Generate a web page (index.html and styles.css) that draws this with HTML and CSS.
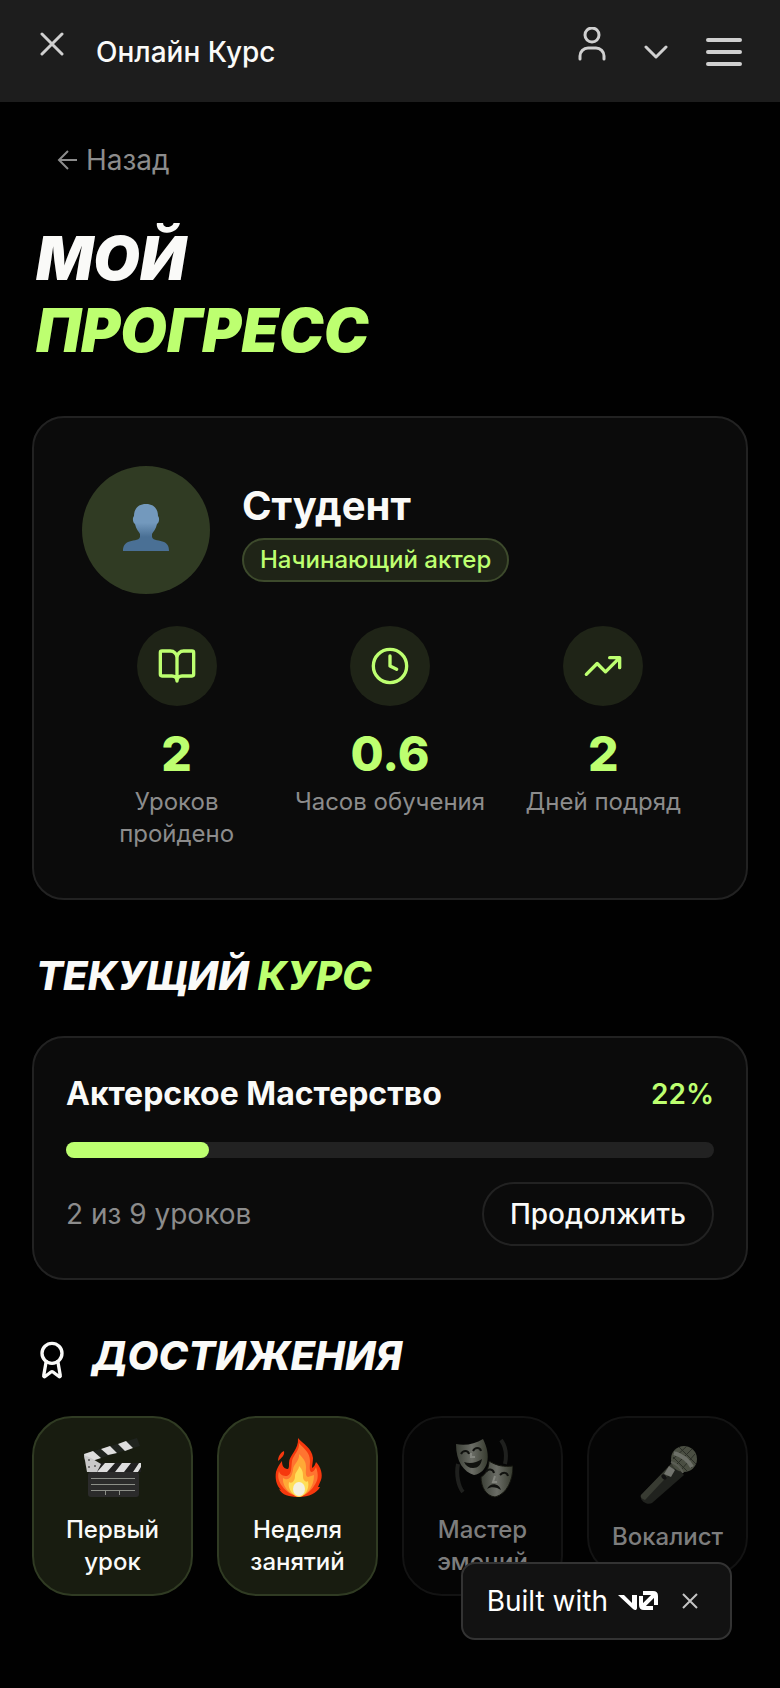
FILE: index.html
```html
<!DOCTYPE html>
<html lang="ru">

<head>
    <meta charset="UTF-8">
    <meta name="viewport" content="width=device-width, initial-scale=1.0">
    <title>Онлайн Курс</title>
    <link rel="stylesheet" href="styles.css">
</head>

<body>
    <!-- header -->
    <header class="topbar">
        <button class="icon-btn close" type="button" aria-label="Закрыть">
            <svg width="24" height="24" viewBox="0 0 24 24"><path d="M2 2l20 20M22 2L2 22" /></svg>
        </button>
        <span class="app-name">Онлайн Курс</span>
        <button class="icon-btn user" type="button" aria-label="Профиль">
            <svg width="28" height="34" viewBox="0 0 28 34"><circle cx="14" cy="8" r="7" /><path d="M2 32v-3a8 8 0 0 1 8-8h8a8 8 0 0 1 8 8v3" /></svg>
        </button>
        <button class="icon-btn" type="button" aria-label="Развернуть">
            <svg width="24" height="14" viewBox="0 0 24 14"><path d="M2 2l10 10L22 2" /></svg>
        </button>
        <button class="icon-btn menu" type="button" aria-label="Меню">
            <svg width="36" height="28" viewBox="0 0 36 28"><path d="M2 2h32M2 14h32M2 26h32" /></svg>
        </button>
    </header>

    <main class="page">
        <a class="back" href="#">
            <svg width="22" height="20" viewBox="0 0 22 20"><path d="M21 10H3M12 1l-9 9 9 9" /></svg>
            Назад
        </a>

        <h1 class="title">МОЙ<br><span class="accent">ПРОГРЕСС</span></h1>

        <!-- profile -->
        <section class="card profile">
            <div class="person">
                <div class="avatar">
                    <svg width="48" height="48" viewBox="0 0 48 48">
                        <defs>
                            <linearGradient id="bust" x1="0" y1="0" x2="0" y2="1">
                                <stop offset="0.4" stop-color="#7399bd" />
                                <stop offset="0.7" stop-color="#4a7095" />
                            </linearGradient>
                        </defs>
                        <path fill="url(#bust)" d="M24 0c8 0 12 5 12 12 2 2 1 7-1 8-1 5-4 8-5 10v3c1 4 8 3 12 5 4 2 5 5 5 9H1c0-4 1-7 5-9 4-2 11-1 12-5v-3c-1-2-4-5-5-10-2-1-3-6-1-8C12 5 16 0 24 0z" />
                    </svg>
                </div>
                <div>
                    <h2 class="name">Студент</h2>
                    <span class="badge">Начинающий актер</span>
                </div>
            </div>
            <div class="stats">
                <div class="stat">
                    <div class="stat-icon">
                        <svg width="40" height="40" viewBox="0 0 24 24"><path d="M12 7v14M3 18a1 1 0 0 1-1-1V4a1 1 0 0 1 1-1h5a4 4 0 0 1 4 4 4 4 0 0 1 4-4h5a1 1 0 0 1 1 1v13a1 1 0 0 1-1 1h-6a3 3 0 0 0-3 3 3 3 0 0 0-3-3z" /></svg>
                    </div>
                    <div class="stat-value">2</div>
                    <div class="stat-label">Уроков пройдено</div>
                </div>
                <div class="stat">
                    <div class="stat-icon">
                        <svg width="40" height="40" viewBox="0 0 24 24"><circle cx="12" cy="12" r="10" /><path d="M12 6v6l4 2" /></svg>
                    </div>
                    <div class="stat-value">0.6</div>
                    <div class="stat-label">Часов обучения</div>
                </div>
                <div class="stat">
                    <div class="stat-icon">
                        <svg width="40" height="40" viewBox="0 0 24 24"><path d="M22 7l-8.500 8.500-5-5L2 17M16 7h6v6" /></svg>
                    </div>
                    <div class="stat-value">2</div>
                    <div class="stat-label">Дней подряд</div>
                </div>
            </div>
        </section>

        <!-- current course -->
        <h2 class="section-title">ТЕКУЩИЙ <span class="accent">КУРС</span></h2>
        <section class="card course">
            <div class="row">
                <h3 class="course-name">Актерское Мастерство</h3>
                <span class="percent">22%</span>
            </div>
            <div class="bar"><div class="bar-fill" style="width: 22%"></div></div>
            <div class="row">
                <span class="lessons">2 из 9 уроков</span>
                <button class="continue" type="button">Продолжить</button>
            </div>
        </section>

        <!-- achievements -->
        <h2 class="section-title">
            <svg width="40" height="40" viewBox="0 0 24 24"><circle cx="12" cy="8" r="6" /><path d="M15.500 12.900l1.500 8.500a.5.5 0 0 1-.8.500l-3.600-2.700a1 1 0 0 0-1.200 0l-3.600 2.700a.5.5 0 0 1-.8-.500l1.500-8.500" /></svg>
            <span>ДОСТИЖЕНИЯ</span>
        </h2>
        <div class="tiles">
            <div class="tile">
                <svg width="60" height="60" viewBox="0 0 60 60">
                    <path fill="#20241f" d="M1 16L54 0l3 8L5 24z" />
                    <path fill="#dedede" d="M1 16l9-3 8 7-9 3-7-1zM18 11l9-3 7 7-9 2zM35 6l8-3 7 7-8 3z" />
                    <path fill="#202020" d="M4 25h54v9H4z" />
                    <path fill="#dedede" d="M14 34l8-9h10l-8 9zM32 34l7-9h9l-7 9zM50 34l6-9h2v4l-3 5z" />
                    <path fill="#c9c9c9" d="M1 17l7 3 10 6-4 8H4z" />
                    <circle cx="6" cy="22" r="1" fill="#555" /><circle cx="6" cy="29" r="1" fill="#555" /><circle cx="12" cy="28" r="1" fill="#555" />
                    <rect x="5" y="34" width="51" height="25" rx="3" fill="#2b2b2b" />
                    <path stroke="#8c8f88" stroke-width="1" d="M8 40.500h44M8 46.500h44M8 52.500h44M22.500 53v4M36.500 53v4" />
                </svg>
                <span>Первый урок</span>
            </div>
            <div class="tile">
                <svg width="60" height="60" viewBox="0 0 60 60">
                    <path fill="#f6380d" d="M30 0c5 6 14 10 15 20 0 4-1 7-1 10 2-1 3-3 4-6 5 5 7 13 5 18l-3 7h2c-3 6-11 10-21 10S14 57 11 51l2 1c-5-5-6-12-5-18 1-4 3-7 6-11 0 4 1 7 5 8 2 0 2-2 2-6 0-8 10-13 9-25zM16 13c1 5-3 7-6 10 0-4 2-8 6-10z" />
                    <path fill="#ff7430" d="M31 5c5 6 11 9 11 18 0 4-1 9 1 11 2 0 4-2 5-5 3 8 2 14-2 19-4 6-9 10-15 10s-13-4-17-10c-3-4-5-9-3-15 1 4 4 5 8 5 5-2 4-8 5-15 1-6 8-11 7-18z" />
                    <path fill="#ffa936" d="M31 16c5 5 7 8 7 13 0 5-1 9 2 10l6-2c0 13-8 21-15 21s-17-8-16-18c6 4 9-2 10-8 0-6 7-9 6-16z" />
                    <path fill="#ffdf58" d="M31 28c4 4 4 7 4 11 0 3 3 6 5 4 2 9-4 16-9 16s-12-8-10-15c3 2 6-1 6-6 0-4 4-6 4-10z" />
                    <ellipse cx="31" cy="51" rx="6" ry="7" fill="#f4f0df" />
                </svg>
                <span>Неделя занятий</span>
            </div>
            <div class="tile locked">
                <svg width="60" height="60" viewBox="0 0 60 60">
                    <defs>
                        <linearGradient id="mask" x1="0" y1="0" x2="1" y2="0">
                            <stop offset="0" stop-color="#3b3f36" />
                            <stop offset="0.5" stop-color="#6b6d66" />
                            <stop offset="1" stop-color="#363a2e" />
                        </linearGradient>
                    </defs>
                    <path fill="none" stroke="#1f201e" stroke-width="4" d="M5 26c-2 10 0 22 5 28M48 2c5 7 6 15 4 24" />
                    <path fill="url(#mask)" d="M3 6c9 2 19 0 27-5 4 8 6 16 4 24-2 6-6 11-13 12C11 34 3 24 3 6z" />
                    <path fill="none" stroke="#11120f" stroke-width="2" d="M8 16c2-4 7-4 8 0M20 13c2-4 7-4 8 0" />
                    <path fill="none" stroke="#84867f" stroke-width="2" d="M18 15v4h4" />
                    <path fill="#11120f" d="M11 24c6 2 12 1 18-3-1 6-4 9-9 9-4 0-7-2-9-6z" />
                    <path fill="url(#mask)" stroke="#15160f" d="M36 23c8 5 15 6 24 5 0 14-6 28-18 31-9-1-14-10-14-20 4-2 8-8 8-16z" />
                    <path fill="none" stroke="#11120f" stroke-width="2" d="M33 34c2-4 7-3 8 1M47 37c3-3 7-3 8 1" />
                    <path fill="none" stroke="#84867f" stroke-width="2" d="M42 38l-2 6h4" />
                    <path fill="#11120f" d="M34 51c3-7 12-6 14 1-4-3-10-4-14-1z" />
                </svg>
                <span>Мастер эмоций</span>
            </div>
            <div class="tile locked">
                <svg width="60" height="60" viewBox="0 0 60 60">
                    <path fill="#20221e" d="M34 18l12 12-32 28c-5 3-13-3-11-8z" />
                    <path fill="#383b32" d="M34 18l4 4L7 55c-3-1-5-3-4-5z" />
                    <path fill="#72746e" d="M31 21l6 4-4 7-7-3z" />
                    <ellipse cx="26" cy="32" rx="3" ry="2" fill="#111" transform="rotate(45 26 32)" />
                    <circle cx="46" cy="14" r="13" fill="#4a4e42" />
                    <path fill="none" stroke="#2b2e27" stroke-width="1" d="M37 6l17 17M41 2l17 17M35 12l14 14M57 9L43 25M54 4L38 20M49 1L35 14" />
                    <path fill="none" stroke="#6d7068" stroke-width="4" d="M36 8c7 2 14 7 18 14" />
                    <path fill="none" stroke="#5b5e55" stroke-width="2" d="M33 17c6 2 10 6 12 11" />
                </svg>
                <span>Вокалист</span>
            </div>
        </div>
    </main>

    <!-- floating widget -->
    <div class="built">
        <a class="built-link" href="#">Built with
            <svg width="40" height="20" viewBox="0 0 40 20" role="img" aria-label="v0">
                <path fill="#fff" d="M0 4h6l8 8V4h5v13c0 2-2 3-4 1z" />
                <path fill="none" stroke="#fff" stroke-width="4" d="M23 5v9c0 2 1 3 3 3h9M25 2h10c2 0 3 1 3 3v9M24 16L37 3" />
            </svg>
        </a>
        <button class="built-close" type="button" aria-label="Close">
            <svg width="16" height="16" viewBox="0 0 16 16"><path d="M1 1l14 14M15 1L1 15" /></svg>
        </button>
    </div>
</body>

</html>
```
FILE: styles.css
```css
* {
    box-sizing: border-box;
}

body {
    --lime: #bdff70;
    --text: #fafaf8;
    --muted: #8c8c8c;
    --line: #222;
    --card: #0b0b0b;
    margin: 0;
    background-color: #010101;
    color: var(--text);
    font-family: Inter, "Noto Sans", sans-serif;
    font-size: 28px;
    line-height: 40px;
}

h1, h2, h3 {
    margin: 0;
}

button {
    font: inherit;
    color: inherit;
    background: none;
    border: 0;
    padding: 0;
    cursor: pointer;
}

a {
    color: inherit;
    text-decoration: none;
}

svg {
    display: block;
    flex: none;
}

.accent {
    color: var(--lime);
}

/* header */
.topbar {
    display: flex;
    align-items: center;
    height: 102px;
    padding: 2px 38px 0 40px;
    background-color: #1d1d1d;
    font-weight: 500;
}

.icon-btn svg {
    fill: none;
    stroke: #d0d0d0;
    stroke-width: 3;
    stroke-linecap: round;
    stroke-linejoin: round;
}

.close,
.user {
    padding-bottom: 16px;
}

.app-name {
    flex: 1;
    margin-left: 32px;
}

.user {
    margin-right: 38px;
}

.menu {
    margin-left: 38px;
}

.icon-btn.menu svg {
    stroke-width: 4;
}

/* page */
.page {
    padding: 38px 32px 92px;
}

.back {
    display: inline-flex;
    align-items: center;
    gap: 8px;
    padding: 0 24px;
    color: var(--muted);
}

.back svg {
    fill: none;
    stroke: currentColor;
    stroke-width: 2;
}

.title {
    margin: 42px 0 50px;
    padding-left: 4px;
    font-size: 60px;
    line-height: 72px;
    font-weight: 900;
    font-style: italic;
}

.card {
    border: 2px solid var(--line);
    border-radius: 32px;
    background-color: var(--card);
}

.profile {
    padding: 48px;
}

.person {
    display: flex;
    align-items: center;
    gap: 32px;
    margin-bottom: 32px;
}

.avatar {
    display: flex;
    align-items: center;
    justify-content: center;
    width: 128px;
    height: 128px;
    padding-bottom: 4px;
    border-radius: 50%;
    background-color: #303b23;
}

.name {
    margin-bottom: 4px;
    font-size: 40px;
    line-height: 56px;
    font-weight: 700;
}

.badge {
    display: block;
    padding: 4px 16px;
    border: 2px solid #3d4a2c;
    border-radius: 22px;
    background-color: #1f2417;
    color: var(--lime);
    font-size: 24px;
    line-height: 32px;
    font-weight: 500;
}

.stats {
    display: grid;
    grid-template-columns: repeat(3, 1fr);
    gap: 24px;
}

.stat {
    text-align: center;
}

.stat-icon {
    display: flex;
    align-items: center;
    justify-content: center;
    width: 80px;
    height: 80px;
    margin: 0 auto 16px;
    border-radius: 50%;
    background-color: #1f2417;
}

.stat-icon svg,
.section-title svg {
    fill: none;
    stroke: var(--lime);
    stroke-width: 2;
    stroke-linecap: round;
    stroke-linejoin: round;
}

.stat-value {
    color: var(--lime);
    font-size: 48px;
    line-height: 64px;
    font-weight: 800;
}

.stat-label {
    margin: 0 -4px;
    color: var(--muted);
    font-size: 24px;
    line-height: 32px;
}

.section-title {
    margin: 48px 0 32px;
    padding-left: 4px;
    font-size: 40px;
    line-height: 56px;
    font-weight: 800;
    font-style: italic;
}

.section-title:has(svg) {
    display: flex;
    gap: 20px;
    padding-left: 0;
}

.section-title svg {
    margin-top: 12px;
    stroke: var(--text);
}

/* course */
.course {
    padding: 32px;
}

.row {
    display: flex;
    align-items: center;
    justify-content: space-between;
}

.course-name {
    font-size: 32px;
    line-height: 48px;
    font-weight: 700;
}

.percent {
    color: var(--lime);
    font-weight: 600;
}

.bar {
    height: 16px;
    margin: 24px 0;
    border-radius: 8px;
    background-color: var(--line);
}

.bar-fill {
    height: 100%;
    border-radius: 8px;
    background-color: var(--lime);
}

.lessons {
    color: var(--muted);
}

.continue {
    height: 64px;
    padding: 0 26px;
    border: 2px solid var(--line);
    border-radius: 32px;
    font-weight: 500;
}

/* achievements */
.tiles {
    display: grid;
    grid-template-columns: repeat(4, 1fr);
    align-items: start;
    gap: 24px;
}

.tile {
    display: flex;
    flex-direction: column;
    align-items: center;
    justify-content: center;
    width: 100%;
    aspect-ratio: 1;
    padding: 16px;
    border: 2px solid #303b23;
    border-radius: 40px;
    background-color: #181c10;
    font-size: 24px;
    line-height: 32px;
    font-weight: 500;
    text-align: center;
}

.tile svg {
    margin: 4px 0 16px;
}

.locked {
    border-color: #131313;
    background-color: #050505;
    color: #7d7d7d;
}

/* built with */
.built {
    position: fixed;
    right: 48px;
    bottom: 48px;
    display: flex;
    align-items: center;
    gap: 24px;
    height: 78px;
    padding: 0 32px 0 24px;
    border: 2px solid #333;
    border-radius: 14px;
    background-color: #121212;
}

.built-link {
    display: flex;
    align-items: center;
    gap: 10px;
    color: #fff;
}

.built-close svg {
    fill: none;
    stroke: #c4c4c4;
    stroke-width: 2;
}
```
